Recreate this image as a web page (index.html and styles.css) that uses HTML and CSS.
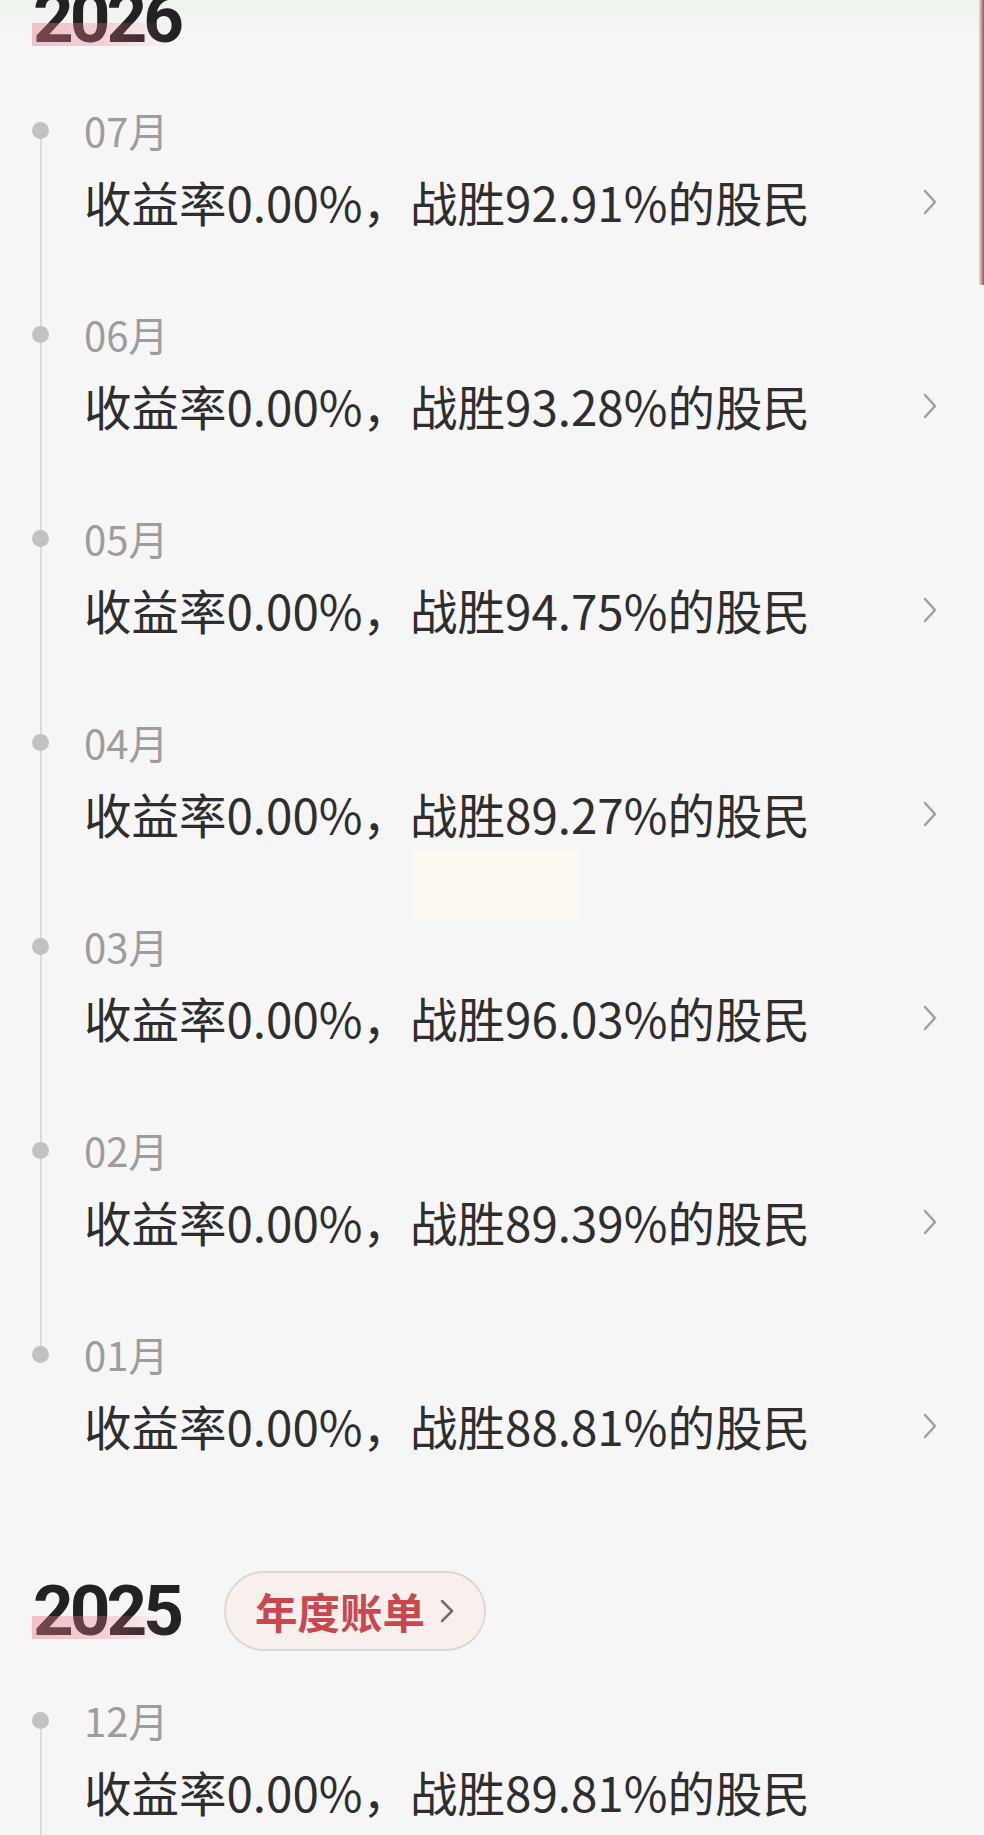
FILE: index.html
```html
<!DOCTYPE html>
<html lang="zh-CN">
<head>
<meta charset="utf-8">
<title>收益月报</title>
<link rel="stylesheet" href="styles.css">
</head>
<body>
<div class="page">
  <div class="edge"></div>
  <div class="ghost"></div>

  <section class="year first">
    <div class="year-head"><h2 class="year-num">2026</h2></div>
    <ul class="timeline">
      <li class="item">
        <div class="month"><span class="dot"></span><span>07月</span></div>
        <div class="row"><span class="stat">收益率0.00%，战胜92.91%的股民</span><svg class="chev" viewBox="0 0 14 26"><polyline points="2,2 12,13 2,24"/></svg></div>
      </li>
      <li class="item">
        <div class="month"><span class="dot"></span><span>06月</span></div>
        <div class="row"><span class="stat">收益率0.00%，战胜93.28%的股民</span><svg class="chev" viewBox="0 0 14 26"><polyline points="2,2 12,13 2,24"/></svg></div>
      </li>
      <li class="item">
        <div class="month"><span class="dot"></span><span>05月</span></div>
        <div class="row"><span class="stat">收益率0.00%，战胜94.75%的股民</span><svg class="chev" viewBox="0 0 14 26"><polyline points="2,2 12,13 2,24"/></svg></div>
      </li>
      <li class="item">
        <div class="month"><span class="dot"></span><span>04月</span></div>
        <div class="row"><span class="stat">收益率0.00%，战胜89.27%的股民</span><svg class="chev" viewBox="0 0 14 26"><polyline points="2,2 12,13 2,24"/></svg></div>
      </li>
      <li class="item">
        <div class="month"><span class="dot"></span><span>03月</span></div>
        <div class="row"><span class="stat">收益率0.00%，战胜96.03%的股民</span><svg class="chev" viewBox="0 0 14 26"><polyline points="2,2 12,13 2,24"/></svg></div>
      </li>
      <li class="item">
        <div class="month"><span class="dot"></span><span>02月</span></div>
        <div class="row"><span class="stat">收益率0.00%，战胜89.39%的股民</span><svg class="chev" viewBox="0 0 14 26"><polyline points="2,2 12,13 2,24"/></svg></div>
      </li>
      <li class="item">
        <div class="month"><span class="dot"></span><span>01月</span></div>
        <div class="row"><span class="stat">收益率0.00%，战胜88.81%的股民</span><svg class="chev" viewBox="0 0 14 26"><polyline points="2,2 12,13 2,24"/></svg></div>
      </li>
    </ul>
  </section>

  <section class="year second">
    <div class="year-head">
      <h2 class="year-num">2025</h2>
      <a class="bill">年度账单<svg class="bill-chev" viewBox="0 0 14 26"><polyline points="2,3 12,13 2,23"/></svg></a>
    </div>
    <ul class="timeline open">
      <li class="item">
        <div class="month"><span class="dot"></span><span>12月</span></div>
        <div class="row"><span class="stat">收益率0.00%，战胜89.81%的股民</span></div>
      </li>
    </ul>
  </section>
</div>
</body>
</html>
```

FILE: styles.css
```css
html, body {
  margin: 0;
  padding: 0;
}

body {
  background: #f6f6f6;
  font-family: "Noto Sans CJK SC", "Noto Sans", sans-serif;
  color: #333;
}

.page {
  position: relative;
  width: 984px;
  height: 1835px;
  overflow: hidden;
  background: linear-gradient(#eef3ec 0, #f6f6f6 36px);
}

.edge {
  position: absolute;
  top: 0;
  right: 0;
  width: 5px;
  height: 285px;
  background: linear-gradient(90deg, #f0ddd5, #8e5b47);
}

.ghost {
  position: absolute;
  left: 413px;
  top: 850px;
  width: 164px;
  height: 70px;
  background: #fcfaf2;
}

.year.first .year-head {
  margin-top: -22px;
}

.year.second {
  margin-top: 101px;
}

.year-head {
  display: flex;
  align-items: center;
  gap: 44px;
  height: 80px;
  padding-left: 33px;
}

.year-num {
  position: relative;
  margin: 0;
  font-family: Roboto, "Noto Sans", sans-serif;
  font-weight: 700;
  font-size: 71px;
  line-height: 80px;
  letter-spacing: -4px;
  color: #222;
}

.year-num::after {
  content: "";
  position: absolute;
  left: -1px;
  top: 45px;
  width: 140px;
  height: 23px;
  background: linear-gradient(90deg, rgba(236, 120, 140, 0.42) 0%, rgba(236, 120, 140, 0.3) 50%, rgba(236, 120, 140, 0) 100%);
}

.bill {
  display: inline-flex;
  align-items: center;
  gap: 15px;
  box-sizing: border-box;
  height: 80px;
  padding: 0 30px 0 29px;
  border: 2px solid #e0d6d2;
  border-radius: 40px;
  background: #f8f0ed;
  color: #c9484f;
  font-weight: 700;
  font-size: 42.5px;
  line-height: 1;
  text-decoration: none;
}

.bill-chev {
  width: 14px;
  height: 26px;
  fill: none;
  stroke: #6e6e6e;
  stroke-width: 2.5;
  stroke-linecap: round;
  stroke-linejoin: round;
}

.timeline {
  list-style: none;
  margin: 44px 0 0;
  padding: 0;
  display: flex;
  flex-direction: column;
  gap: 60px;
  background: linear-gradient(#dcdcdc, #dcdcdc) no-repeat 40px 28px / 2px calc(100% - 144px);
}

.second .timeline {
  margin-top: 41px;
}

.timeline.open {
  padding-bottom: 80px;
  background-size: 2px 100%;
}

.month {
  display: flex;
  align-items: center;
  gap: 35px;
  height: 56px;
  padding-left: 32px;
  font-size: 40px;
  line-height: 56px;
  color: #9d9d9d;
}

.dot {
  flex: none;
  width: 17px;
  height: 17px;
  border-radius: 50%;
  background: #c2c2c2;
}

.row {
  display: flex;
  align-items: center;
  justify-content: space-between;
  height: 88px;
  padding: 0 47px 0 84px;
}

.stat {
  font-size: 47.5px;
  line-height: 88px;
  color: #2e2e2e;
  white-space: nowrap;
}

.chev {
  flex: none;
  width: 14px;
  height: 26px;
  fill: none;
  stroke: #a0a0a0;
  stroke-width: 2.5;
  stroke-linecap: round;
  stroke-linejoin: round;
}
```
